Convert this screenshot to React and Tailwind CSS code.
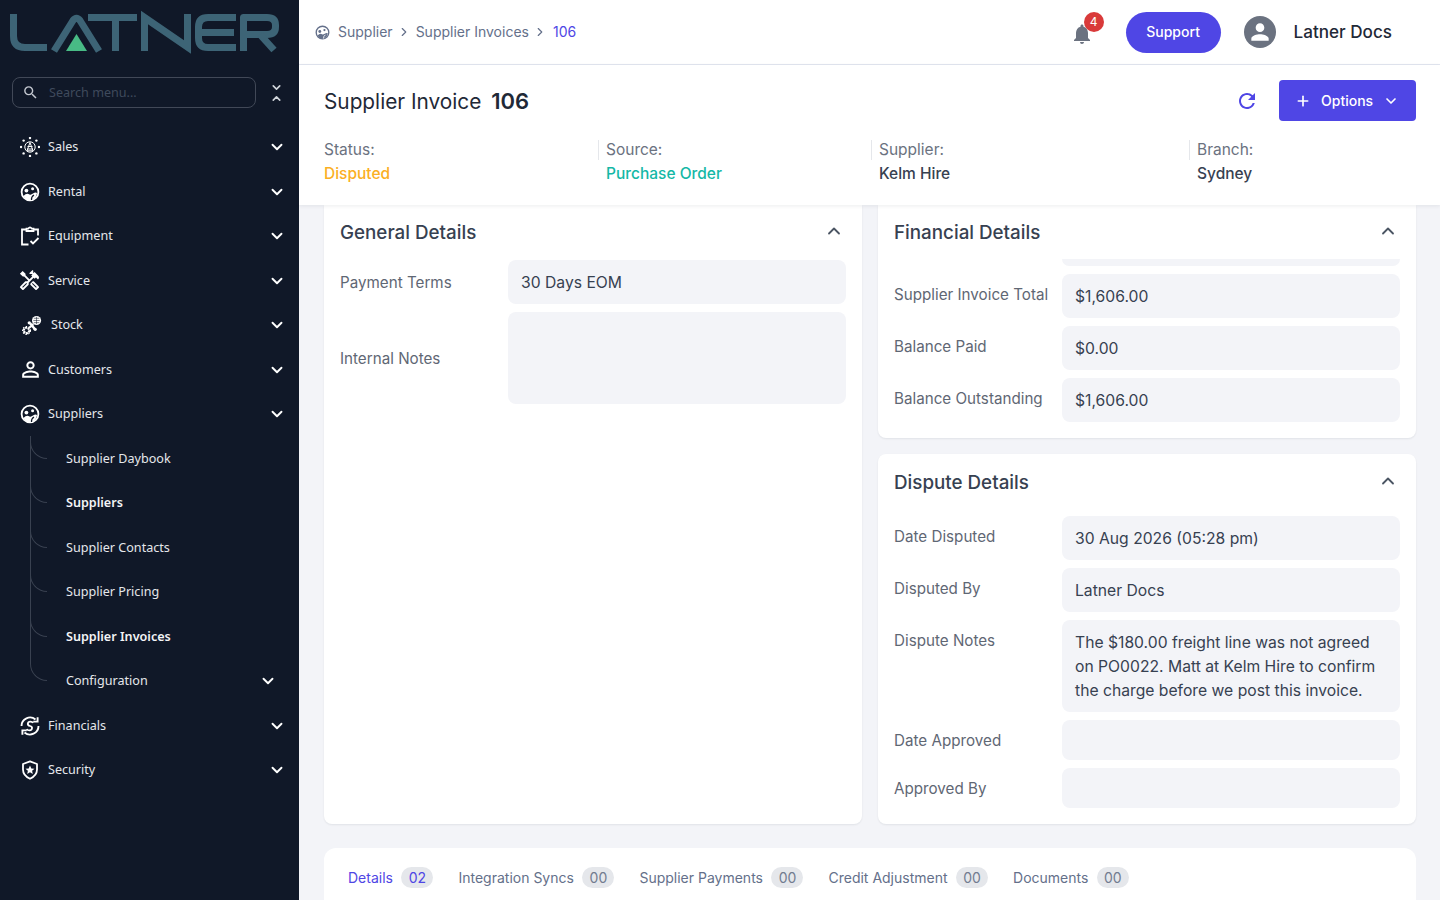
import React from "react";
import { ChevronDown, ChevronRight, ChevronUp, Plus } from "lucide-react";
import { MdNotifications, MdOutlineHandyman, MdPerson, MdPersonOutline, MdRefresh, MdSearch } from "react-icons/md";

const LOGO = "#3d6476";
const NAVY = "#101828";

const Logo = () => (
    <svg width="280" height="52" viewBox="0 0 280 52" className="block">
        <g fill="none" stroke={LOGO} strokeWidth="7" strokeLinejoin="round">
            <path d="M13.5 11 V33 Q13.5 44.5 25 44.5 H47" />
            <path d="M54 48 L73 17.5 Q76.5 13 80 17.5 L99 48" />
            <path d="M88 14.5 H137" />
            <path d="M115.5 14.5 V48" />
            <path d="M144.5 48 V14.5 L187.5 44 V11" strokeLinejoin="miter" />
            <path d="M236 14.5 H208 Q198.5 14.5 198.5 24 V35 Q198.5 44.5 208 44.5 H236" />
            <path d="M200 29.5 H234" />
            <path d="M243.5 48 V14.5 H267 Q275.5 14.5 275.5 22 V24 Q275.5 31.5 267 31.5 H246" />
            <path d="M260 31.5 L274 47" />
        </g>
        <path d="M66 48 L76.5 31 L87 48 Z" fill="#48bb85" />
    </svg>
);

const SalesIcon = () => (
    <svg width="20" height="20" viewBox="0 0 20 20" fill="white">
        <circle cx="10" cy="10" r="5.2" fill="none" stroke="white" strokeWidth="1" />
        <path d="M10 5.5 L13 13.8 H7 Z" fill="none" stroke="white" strokeWidth="1" />
        <path d="M7.5 9.5 H12.5 M7 12 H13" stroke="white" strokeWidth="1" />
        <circle cx="10" cy="1" r="1.2" />
        <circle cx="10" cy="19" r="1.2" />
        <circle cx="1" cy="10" r="1.2" />
        <circle cx="19" cy="10" r="1.2" />
        <circle cx="3.6" cy="3.6" r="1.2" />
        <circle cx="16.4" cy="3.6" r="1.2" />
        <circle cx="3.6" cy="16.4" r="1.2" />
        <circle cx="16.4" cy="16.4" r="1.2" />
    </svg>
);

// circle with two eyes and a solid patch, used for Rental, Suppliers and the breadcrumb
const FaceIcon = ({ size = 20, color = "white", cut = NAVY }) => (
    <svg width={size} height={size} viewBox="0 0 20 20">
        <circle cx="10" cy="10" r="8.4" fill="none" stroke={color} strokeWidth="1.8" />
        <circle cx="6.4" cy="8.6" r="1.9" fill={color} />
        <circle cx="12.6" cy="6.8" r="1.5" fill={color} />
        <path d="M3.5 14 Q6.5 10.6 9.5 12.4 Q10.8 13.2 13 11.6 Q15.5 10 17 11 Q16.5 16 12 18 L8.5 18.4 Q5 17.5 3.5 14 Z" fill={color} />
        <path d="M11.5 18 Q11 14.8 14 13" fill="none" stroke={cut} strokeWidth="1.2" />
    </svg>
);

const EquipmentIcon = () => (
    <svg width="20" height="20" viewBox="0 0 20 20" fill="none" stroke="white" strokeWidth="1.8">
        <path d="M6 3.5 H2 V18.5 H8.5" />
        <path d="M14 3.5 H18 V9.5" />
        <path d="M6.5 5 V2.6 H8.3 Q10 0.2 11.7 2.6 H13.5 V5 Z" />
        <path d="M10.5 15 L13 17.5 L18.5 12" />
    </svg>
);

const StockIcon = () => (
    <svg width="22" height="22" viewBox="0 0 22 22" fill="white">
        <circle cx="16" cy="6" r="5" />
        <path d="M12.5 6 H19.5 M16 2 V10 M13 3.6 H19 M13 8.4 H19" stroke={NAVY} strokeWidth="0.6" />
        <circle cx="5" cy="17" r="3" fill="none" stroke="white" strokeWidth="2.4" strokeDasharray="2.4 0.6" />
        <circle cx="5" cy="17" r="4.4" fill="none" stroke="white" strokeWidth="1.2" strokeDasharray="1.6 1.6" />
        <path d="M8 14 L12.5 10" stroke="white" strokeWidth="2.4" />
        <path d="M9 9 L14 15.5" stroke="white" strokeWidth="2.6" />
        <circle cx="8" cy="8.6" r="1.8" />
        <circle cx="14.5" cy="15.8" r="1.8" />
    </svg>
);

const FinancialsIcon = () => (
    <svg width="20" height="20" viewBox="0 0 20 20" fill="none" stroke="white" strokeWidth="1.9">
        <path d="M1.5 10 A8.5 8.5 0 0 1 15.5 3.5" />
        <path d="M18.5 10 A8.5 8.5 0 0 1 4.5 16.5" />
        <path d="M17.6 1.2 V5.6 H13.2" />
        <path d="M2.4 18.8 V14.4 H6.8" />
        <path d="M13 7 Q12.4 5.6 10.4 5.6 Q8 5.6 7.8 7.8 Q7.7 9.4 10 10 Q12.4 10.6 12 12.4 Q11.6 14.4 9.6 14.4 Q7.4 14.4 6.8 13" strokeWidth="1.8" />
    </svg>
);

const SecurityIcon = () => (
    <svg width="20" height="20" viewBox="0 0 20 20">
        <path d="M10 1.4 L17 4 V9.5 Q17 15.5 10 18.8 Q3 15.5 3 9.5 V4 Z" fill="none" stroke="white" strokeWidth="1.8" strokeLinejoin="round" />
        <path d="M10 5.4 L11.3 8.4 L14.5 8.7 L12.1 10.8 L12.8 14 L10 12.3 L7.2 14 L7.9 10.8 L5.5 8.7 L8.7 8.4 Z" fill="white" />
    </svg>
);

const menuItems = [
    { label: "Sales", icon: <SalesIcon /> },
    { label: "Rental", icon: <FaceIcon /> },
    { label: "Equipment", icon: <EquipmentIcon /> },
    { label: "Service", icon: <MdOutlineHandyman size={23} color="white" className="-ml-[2px] -mr-[1px]" /> },
    { label: "Stock", icon: <StockIcon />, wide: true },
    { label: "Customers", icon: <MdPersonOutline size={25} color="white" className="-mx-[2.5px]" /> },
    { label: "Suppliers", icon: <FaceIcon /> },
];

const subItems = [
    { label: "Supplier Daybook" },
    { label: "Suppliers", bold: true },
    { label: "Supplier Contacts" },
    { label: "Supplier Pricing" },
    { label: "Supplier Invoices", bold: true },
    { label: "Configuration", arrow: true },
];

const MenuRow = ({ item }) => (
    <div className="flex h-[44.5px] items-center pr-[13px] pl-[20px]">
        <span className={`flex w-5 justify-center ${item.wide ? "mr-[9px] ml-[2px]" : "mr-2"}`}>{item.icon}</span>
        <span className="flex-1 pt-px text-[12.6px] text-[#e5e7eb]">{item.label}</span>
        <ChevronDown size={18} strokeWidth={2.5} color="white" />
    </div>
);

const Sidebar = () => (
    <aside className="flex h-screen w-[299px] shrink-0 flex-col bg-[#101828] font-['Noto_Sans',sans-serif]">
        <div className="h-[65px] pt-[3px]">
            <Logo />
        </div>
        <div className="mt-3 flex items-center pr-[15px] pl-3">
            <div className="flex h-[31px] w-[244px] items-center gap-[10px] rounded-lg border border-[#414857] px-[9px]">
                <MdSearch size={17} color="#c4c8d0" />
                <span className="pt-px text-[12.6px] text-[#3f4a5c]">Search menu...</span>
            </div>
            <div className="ml-auto flex w-[16px] flex-col items-center">
                <ChevronDown size={13} strokeWidth={3} color="#d1d5db" className="-mb-[2px]" />
                <ChevronUp size={13} strokeWidth={3} color="#d1d5db" />
            </div>
        </div>
        <nav className="mt-[16.8px]">
            {menuItems.map((item) => (
                <MenuRow key={item.label} item={item} />
            ))}
            <div className="relative">
                <span className="absolute top-0 bottom-[40px] left-[30px] w-px bg-[#394150]" />
                {subItems.map((item) => (
                    <div key={item.label} className="relative flex h-[44.5px] items-center pr-[22px] pl-[66px]">
                        <span className="absolute top-[4px] left-[30px] h-[18.5px] w-[17px] rounded-bl-[18px] border-b border-l border-[#394150]" />
                        <span className={`flex-1 pt-px text-[12.6px] ${item.bold ? "font-semibold text-[#f3f4f6]" : "text-[#e5e7eb]"}`}>{item.label}</span>
                        {item.arrow && <ChevronDown size={18} strokeWidth={2.5} color="white" />}
                    </div>
                ))}
            </div>
            <MenuRow item={{ label: "Financials", icon: <FinancialsIcon /> }} />
            <MenuRow item={{ label: "Security", icon: <SecurityIcon /> }} />
        </nav>
    </aside>
);

const TopBar = () => (
    <header className="flex h-[65px] shrink-0 items-center border-b border-[#e2e6f0] bg-white pr-[48px] pl-4">
        <div className="flex items-center text-sm text-[#64708a]">
            <FaceIcon size={15} color="#64708a" cut="white" />
            <span className="ml-[8px]">Supplier</span>
            <ChevronRight size={14} className="mx-[4px]" />
            <span className="ml-[1px]">Supplier Invoices</span>
            <ChevronRight size={14} className="mx-[4px]" />
            <span className="ml-[2px] text-[#4f46e5]">106</span>
        </div>
        <div className="ml-auto flex items-center">
            <div className="relative mr-[32px]">
                <MdNotifications size={24} color="#6b7280" className="mt-1" />
                <span className="absolute -top-[6px] left-[14px] flex h-5 w-5 items-center justify-center rounded-full bg-[#d93a3a] text-xs text-white">4</span>
            </div>
            <button className="flex h-[41px] w-[95px] items-center justify-center rounded-full bg-[#4f46e5] text-sm font-medium text-white">Support</button>
            <span className="ml-[23px] flex h-8 w-8 items-center justify-center rounded-full bg-[#6b7280]">
                <MdPerson size={26} color="white" />
            </span>
            <span className="ml-[18px] text-[17.1px] font-medium text-[#1f2937]">Latner Docs</span>
        </div>
    </header>
);

const SummaryField = ({ label, value, color, className }) => (
    <div className={className}>
        <div className="text-[15.5px] leading-6 text-[#6b7280]">{label}</div>
        <div className={`text-[15.5px] leading-6 font-medium ${color}`}>{value}</div>
    </div>
);

const divider = "pl-2 [background:linear-gradient(#e5e7eb,#e5e7eb)_left_2px/1px_20px_no-repeat]";

const SubHeader = () => (
    <section className="relative z-10 h-[140px] shrink-0 bg-white pr-6 pl-[25px] shadow-[0_1px_4px_rgba(17,24,39,0.08)]">
        <div className="flex h-[71px] items-center">
            <h1 className="pt-[2px] text-[20.8px] text-[#1f2937]">
                Supplier Invoice <span className="ml-[4px] text-[22px] font-semibold">106</span>
            </h1>
            <MdRefresh size={24} color="#4f46e5" className="mr-5 ml-auto" />
            <button className="flex h-[41px] w-[137px] items-center rounded-sm bg-[#4f46e5] pl-[16px] text-sm font-medium text-white">
                <Plus size={16} strokeWidth={2.5} />
                <span className="ml-[10px]">Options</span>
                <ChevronDown size={16} strokeWidth={2.5} className="ml-[10px]" />
            </button>
        </div>
        <div className="mt-[2px] flex">
            <SummaryField label="Status:" value="Disputed" color="text-[#fbaf24]" className="w-[274px]" />
            <SummaryField label="Source:" value="Purchase Order" color="text-[#14b8a6]" className={`w-[273px] ${divider}`} />
            <SummaryField label="Supplier:" value="Kelm Hire" color="text-[#374151]" className={`w-[318px] ${divider}`} />
            <SummaryField label="Branch:" value="Sydney" color="text-[#374151]" className={divider} />
        </div>
    </section>
);

const Card = ({ title, className = "", children }) => (
    <div className={`rounded-lg bg-white px-4 shadow-[0_1px_2px_rgba(17,24,39,0.08)] ${className}`}>
        <div className="flex h-7 items-center justify-between">
            <h2 className="pt-[2px] text-[18.8px] font-medium text-[#374151]">{title}</h2>
            <ChevronUp size={20} strokeWidth={2.2} color="#4b5563" className="mr-[2px] -mt-[2px]" />
        </div>
        {children}
    </div>
);

const Field = ({ label, value, fieldClass = "h-11", center }) => (
    <div className={`flex ${center ? "items-center" : "items-start"}`}>
        <div className={`w-[168px] shrink-0 text-[15.2px] leading-6 text-[#5f6774] ${center ? "pt-[2px]" : "pt-[9px]"}`}>{label}</div>
        <div className={`flex-1 rounded-lg bg-[#f3f4f8] pt-[11px] pr-3 pb-[9px] pl-[13px] text-[15.7px] leading-6 text-[#374151] ${fieldClass}`}>{value}</div>
    </div>
);

const Tab = ({ label, count, active }) => (
    <div className="flex items-center gap-[8.5px]">
        <span className={`text-sm ${active ? "text-[#4f46e5]" : "text-[#64708a]"}`}>{label}</span>
        <span className={`flex h-[21px] w-8 items-center justify-center rounded-full bg-[#e5e7eb] text-sm ${active ? "text-[#4f46e5]" : "text-[#727c90]"}`}>{count}</span>
    </div>
);

const Content = () => (
    <div className="flex-1 overflow-hidden bg-[#f3f4f8] pr-6 pl-[25px]">
        <div className="grid h-[619px] grid-cols-2 gap-4">
            <Card title="General Details" className="rounded-t-none pt-[13px]">
                <div className="mt-[14px] flex flex-col gap-2">
                    <Field label="Payment Terms" value="30 Days EOM" center />
                    <Field label="Internal Notes" fieldClass="h-[92px]" center />
                </div>
            </Card>
            <div className="flex flex-col gap-4">
                <Card title="Financial Details" className="h-[233px] shrink-0 rounded-t-none pt-[13px]">
                    <div className="mt-[13px] ml-[168px] h-[7px] rounded-b-lg bg-[#f3f4f8]" />
                    <div className="mt-2 flex flex-col gap-2">
                        <Field label="Supplier Invoice Total" value="$1,606.00" />
                        <Field label="Balance Paid" value="$0.00" />
                        <Field label="Balance Outstanding" value="$1,606.00" />
                    </div>
                </Card>
                <Card title="Dispute Details" className="flex-1 pt-[14px]">
                    <div className="mt-[20px] flex flex-col gap-2">
                        <Field label="Date Disputed" value="30 Aug 2026 (05:28 pm)" />
                        <Field label="Disputed By" value="Latner Docs" />
                        <Field label="Dispute Notes" fieldClass="h-[92px]" value="The $180.00 freight line was not agreed on PO0022. Matt at Kelm Hire to confirm the charge before we post this invoice." />
                        <Field label="Date Approved" fieldClass="h-10" />
                        <Field label="Approved By" fieldClass="h-10" />
                    </div>
                </Card>
            </div>
        </div>
        <div className="mt-6 flex h-[100px] items-start gap-[25px] rounded-xl bg-white px-6 pt-[19px]">
            <Tab label="Details" count="02" active />
            <Tab label="Integration Syncs" count="00" />
            <Tab label="Supplier Payments" count="00" />
            <Tab label="Credit Adjustment" count="00" />
            <Tab label="Documents" count="00" />
        </div>
    </div>
);

export default function App() {
    return (
        <div className="flex h-screen overflow-hidden font-['Inter',sans-serif]">
            <Sidebar />
            <main className="flex min-w-0 flex-1 flex-col">
                <TopBar />
                <SubHeader />
                <Content />
            </main>
        </div>
    );
}
